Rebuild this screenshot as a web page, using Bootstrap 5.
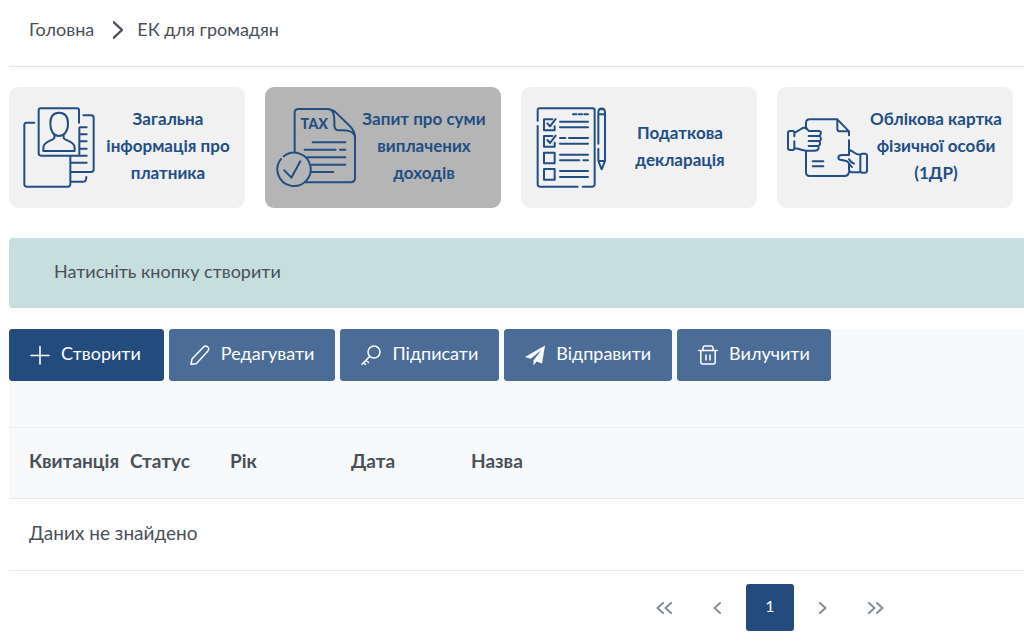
<!DOCTYPE html>
<html lang="uk">
<head>
<meta charset="utf-8">
<meta name="viewport" content="width=device-width, initial-scale=1">
<title>ЕК для громадян</title>
<link href="https://cdn.jsdelivr.net/npm/bootstrap@5.3.0/dist/css/bootstrap.min.css" rel="stylesheet">
<style>
body{font-family:Lato,"Noto Sans",sans-serif;font-size:19px;line-height:28px;color:#495057;background:#fff;padding-left:9px;overflow-x:hidden}
svg{flex:none;fill:none;stroke:currentColor;stroke-linecap:round;stroke-linejoin:round}
.crumbs{padding:15px 20px 23px;border-bottom:1px solid #e4e4e6;font-size:18px;--bs-breadcrumb-divider:none}
.crumbs a{color:inherit}
.crumbs svg{margin:0 14px 0 19px}
.tiles{display:grid;grid-template-columns:repeat(4,minmax(0,1fr));gap:20px;padding:20px 11px 30px 0}
.tile{min-height:121px;padding:0 10px;border-radius:9px;background:#f1f1f1;color:#214e84;font-size:17px;font-weight:700;line-height:27px;text-decoration:none}
.tile.active{background:#b5b5b5}
.tile svg{stroke-width:6}
.tile-label{flex:1 0 0;text-align:center;white-space:nowrap;display:flex;justify-content:center;padding-bottom:4px}
.hint{background:#c6dede;padding:19px 45px 23px;border-radius:4px 0 0 4px;margin-bottom:21px;font-size:18px}
.tools{background:#f8f9fb;gap:5px;padding-bottom:46px;border-bottom:1px solid #edeff1}
.tools .btn{--bs-btn-color:#fff;--bs-btn-bg:#4b6c96;--bs-btn-border-color:#4b6c96;--bs-btn-hover-color:#fff;--bs-btn-hover-bg:#3f608a;height:52px;padding:0 20px;font-size:18px;line-height:28px;border-radius:3px;gap:11px}
.tools .btn.main{--bs-btn-bg:#234b7d;--bs-btn-border-color:#234b7d;padding-right:22px}
.tools .btn span{padding-bottom:4px}
.grid-table{table-layout:fixed;color:inherit;margin:0}
.grid-table th,.grid-table td{padding:20px 0 23px;border-bottom:1px solid #e6e9ec;color:inherit}
.grid-table th:first-child,.grid-table td:first-child{padding-left:20px}
.grid-table th{background:#f8f9fb;font-weight:700;padding-top:19px}
.c1{width:121px}.c2{width:100px}.c3{width:121px}.c4{width:120px}
.pager{padding:13px 124px 12px 0;gap:6px}
.pager .page-link{width:48px;height:47px;padding:0;border:0;border-radius:3px;color:#868e96;background:none}
.pager .active .page-link{background:#234b7d;color:#fff;padding-bottom:4px}
</style>
</head>
<body>
<nav aria-label="Навігація">
<ol class="breadcrumb crumbs mb-0 align-items-center">
<li><a href="#" class="text-decoration-none">Головна</a></li>
<li class="d-flex align-items-center"><svg width="10" height="20" viewBox="0 0 10 20" stroke-width="2.4" aria-hidden="true"><path d="M0.5 3l8.5 8-8.5 8"/></svg><span>ЕК для громадян</span></li>
</ol>
</nav>
<main>
<div class="tiles">
<a href="#" class="tile d-flex align-items-center">
<svg width="82" height="85" viewBox="57 75 246 255" aria-hidden="true"><path d="M103 128H80q-7 0-7 7V313q0 7 7 7H203q8 0 8-8V228M237 128V91q0-6-6-6H122q-6 0-6 6V220q0 7 7 7H260M238 143V222M250 106H273q8 0 8 8V268q0 8-8 8H213M213 305H250q9 0 9-14M240 142H260M240 163H260M240 184H260M240 206H260M213 248H260"/><path d="M177 98c-17 0-26 12-26 33 0 22 10 37 26 37s27-15 27-37c0-21-10-33-27-33zM163 165v8c0 9-33 9-33 30v10h94v-10c0-21-33-21-33-30v-8"/></svg>
<span class="tile-label">Загальна<br>інформація про<br>платника</span></a>
<a href="#" class="tile active d-flex align-items-center" aria-current="true">
<svg width="82" height="85" viewBox="51 75 246 255" aria-hidden="true"><path d="M110 215V98q0-11 11-11H209C228 88 230 108 229 134q0 17 14 17c22-1 46 0 48 22V294q0 13-13 13H142M209 87q15 1 25 11l45 44q12 13 12 31M164 187H262M140 209H233M246 209H262M148 232H262M160 254H262M160 276H226M69 237A50 50 0 1 0 77 229M79 271l21 22 27-49"/><text x="169" y="148" text-anchor="middle" font-family="Lato,sans-serif" font-weight="900" font-size="43" fill="currentColor" stroke="none">TAX</text></svg>
<span class="tile-label">Запит про суми<br>виплачених<br>доходів</span></a>
<a href="#" class="tile d-flex align-items-center">
<svg width="82" height="85" viewBox="48 75 246 255" aria-hidden="true"><path d="M68 122V91q0-6 6-6H233q6 0 6 6V313q0 7-7 7H203M188 320H75q-7 0-7-7V138M174 103H184M191 103H201M208 103H219M135 125H219M135 142H219M135 174H151M162 174H219M135 191H219M135 224H219M135 241H193M205 241H219M135 273H219M135 291H219M112 118H87V151H119V139M97 130l8 9 17-22M112 168H87V200H119V188M97 180l8 9 17-22M87 218H119V250H87zM87 267H119V299H87zM250 191V98M250 98c0-17 20-17 20 0V243L260 268 250 243V206M250 103H270M250 243H270M255 88H265"/></svg>
<span class="tile-label">Податкова<br>декларація</span></a>
<a href="#" class="tile d-flex align-items-center">
<svg width="82" height="85" viewBox="51 75 246 255" aria-hidden="true"><path d="M108 146V129q0-11 11-11H202l35 36V166M202 118v28q0 8 8 8H237M237 181V219M108 215V277q0 11 11 11H223q12 0 14-12M128 244H160M128 259H160M73 158C88 154 91 143 108 142L116 153H146q12 0 3 15 8 10-1 16 6 9-3 14 4 13-10 14H108C92 211 89 205 73 205M116 168H147M116 183H147M116 198H145M54 158q0-5 6-5h8q5 0 5 5M54 158V204q0 6 6 6h8q5 0 5-6V184M73 158V169M271 224q-12 0-18-6-8-7-16-9v16H216q-11 0-11 8 0 6 10 7l14 3c9 3 8 12 17 18M237 250V268q0 8 8 9h8M237 238q6 10 15 13M253 277H271M271 224V272q0 6 6 6h8q6 0 6-6V227q0-6-6-6h-8q-6 0-6 6"/></svg>
<span class="tile-label">Облікова картка<br>фізичної особи<br>(1ДР)</span></a>
</div>
<div class="hint" role="status">Натисніть кнопку створити</div>
<div class="tools d-flex">
<button type="button" class="btn main d-flex align-items-center"><svg width="20" height="20" viewBox="0 0 20 20" stroke-width="1.6" aria-hidden="true"><path d="M10 1.500V19M1 10.500H19"/></svg><span>Створити</span></button>
<button type="button" class="btn d-flex align-items-center"><svg width="20" height="20" viewBox="0 0 20 20" stroke-width="1.500" aria-hidden="true"><path d="M1 19.500l1-5.500L13.500 2q2-2 4.200 0t0 4.200L6.500 18.500z"/></svg><span>Редагувати</span></button>
<button type="button" class="btn d-flex align-items-center"><svg width="20" height="20" viewBox="0 0 20 20" stroke-width="1.500" aria-hidden="true"><circle cx="13" cy="7" r="6"/><path d="M8.700 11.500L1 19.300M5 15.500l2.500 2M2.500 17.500l2 2"/></svg><span>Підписати</span></button>
<button type="button" class="btn d-flex align-items-center"><svg width="20" height="20" viewBox="0 0 20 20" aria-hidden="true"><path fill="currentColor" stroke="none" d="M20 .5L17 18.500 11.500 16.500 8.500 20.500V15.300L16.500 5 5.700 13.800 0 12z"/></svg><span>Відправити</span></button>
<button type="button" class="btn d-flex align-items-center"><svg width="20" height="20" viewBox="0 0 20 20" stroke-width="1.500" aria-hidden="true"><path d="M.8 5.500H19.200M2.800 5.500V17q0 2 2 2H15.200q2 0 2-2V5.500M5 5.500V3q0-2 2-2h6q2 0 2 2V5.500M8 10V15M12 10V15"/></svg><span>Вилучити</span></button>
</div>
<table class="table grid-table">
<colgroup><col class="c1"><col class="c2"><col class="c3"><col class="c4"><col></colgroup>
<thead><tr><th scope="col">Квитанція</th><th scope="col">Статус</th><th scope="col">Рік</th><th scope="col">Дата</th><th scope="col">Назва</th></tr></thead>
<tbody><tr><td colspan="5">Даних не знайдено</td></tr></tbody>
</table>
<nav aria-label="Сторінки">
<ul class="pagination pager justify-content-end mb-0">
<li class="page-item"><a href="#" class="page-link d-flex align-items-center justify-content-center" aria-label="Перша"><svg width="16" height="12" viewBox="0 0 16 12" stroke-width="2"><path d="M7 1L1.500 6 7 11M15 1L9.500 6 15 11"/></svg></a></li>
<li class="page-item"><a href="#" class="page-link d-flex align-items-center justify-content-center" aria-label="Попередня"><svg width="8" height="12" viewBox="0 0 8 12" stroke-width="2"><path d="M7 1L1.500 6 7 11"/></svg></a></li>
<li class="page-item active"><a href="#" class="page-link d-flex align-items-center justify-content-center" aria-current="page">1</a></li>
<li class="page-item"><a href="#" class="page-link d-flex align-items-center justify-content-center" aria-label="Наступна"><svg width="8" height="12" viewBox="0 0 8 12" stroke-width="2"><path d="M1 1L6.500 6 1 11"/></svg></a></li>
<li class="page-item"><a href="#" class="page-link d-flex align-items-center justify-content-center" aria-label="Остання"><svg width="16" height="12" viewBox="0 0 16 12" stroke-width="2"><path d="M1 1L6.500 6 1 11M9 1L14.500 6 9 11"/></svg></a></li>
</ul>
</nav>
</main>
<script src="https://cdn.jsdelivr.net/npm/bootstrap@5.3.0/dist/js/bootstrap.bundle.min.js"></script>
</body>
</html>
